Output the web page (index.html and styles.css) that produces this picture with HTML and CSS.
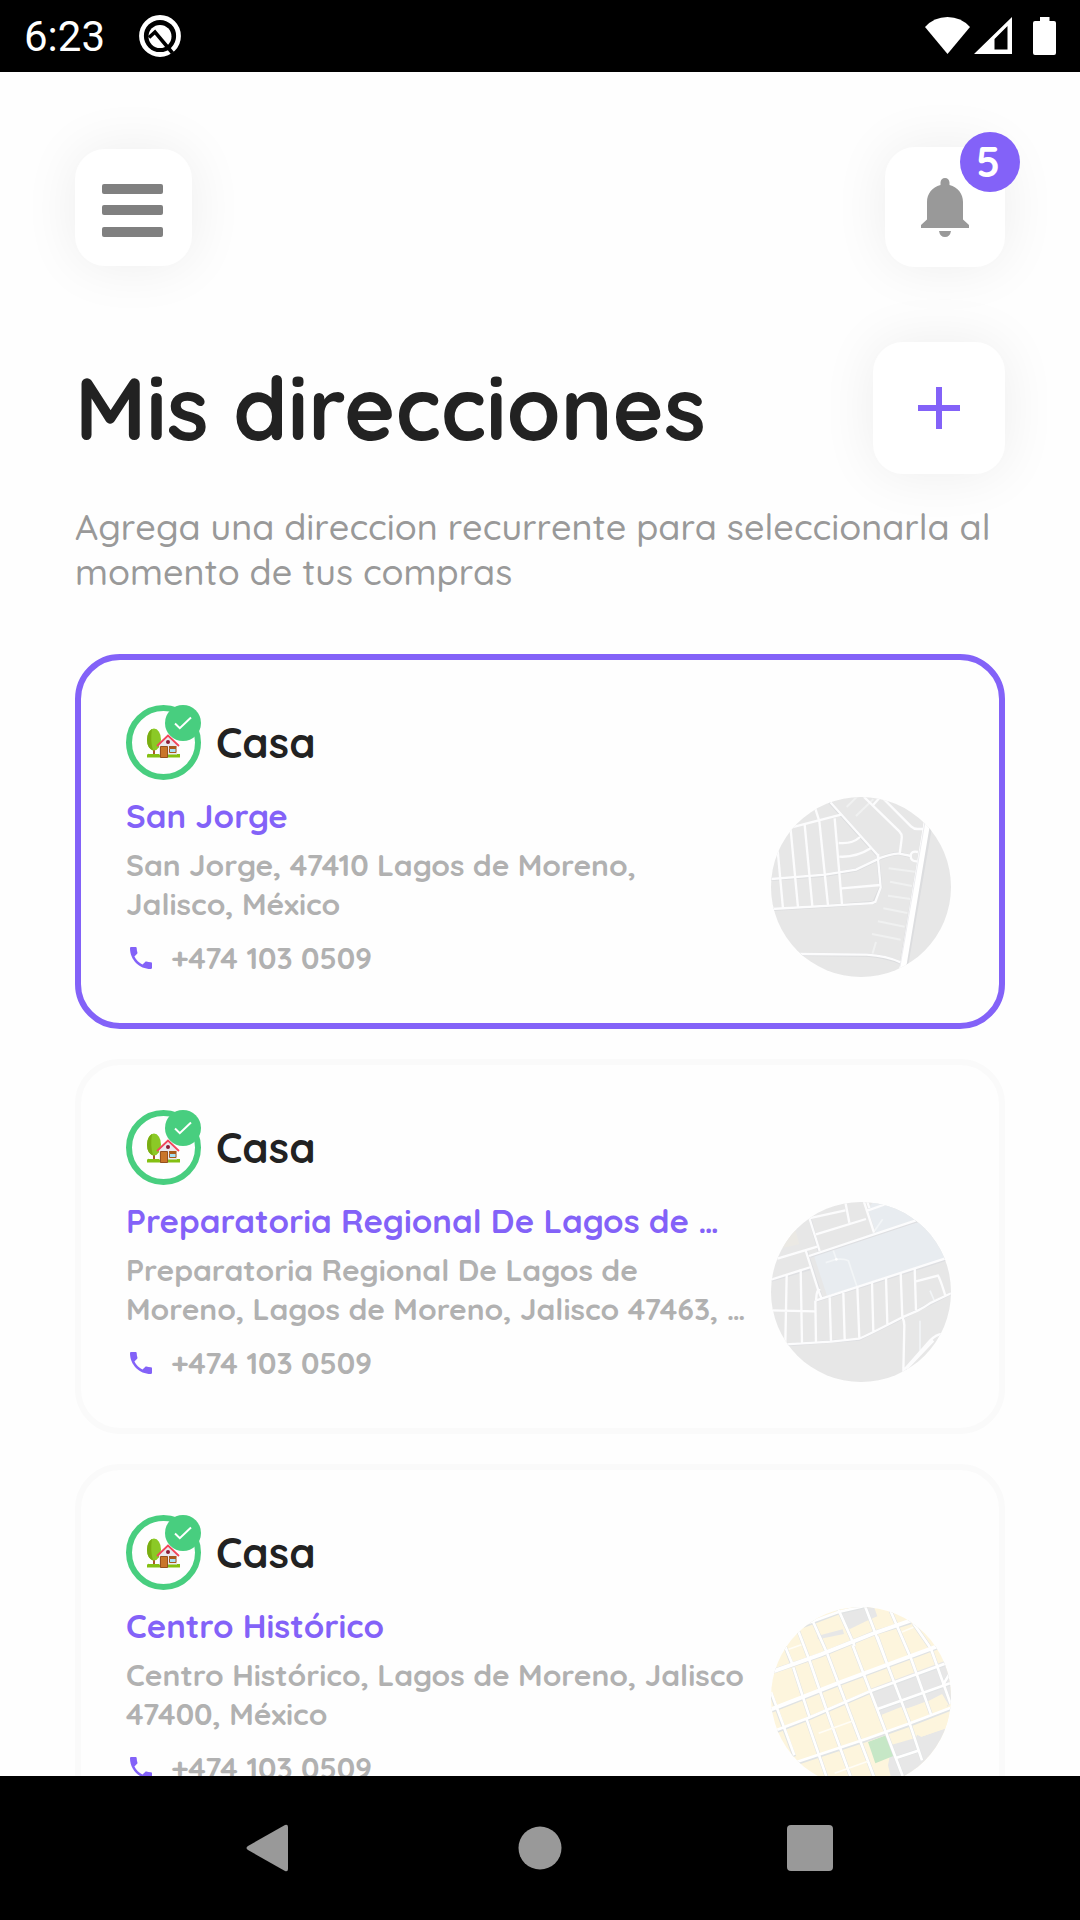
FILE: index.html
```html
<!DOCTYPE html>
<html lang="es">
<head>
<meta charset="utf-8">
<meta name="viewport" content="width=device-width, initial-scale=1">
<title>Mis direcciones</title>
<link rel="stylesheet" href="styles.css">
</head>
<body>
<svg class="sprite" aria-hidden="true">
  <symbol id="house" viewBox="0 0 33 30">
    <path d="M0 27q1-2 2-1l1 0 30 0q0 1 0 3.500H0z" fill="#84c012"/>
    <path d="M6 20h2v6H6z" fill="#a9592c"/>
    <ellipse cx="7" cy="11.500" rx="7" ry="11" fill="#8bc926"/>
    <path d="M5 1Q0 4 0 12q0 8 6 10.500Q3 12 5 1z" fill="#79ad12"/>
    <path d="M12 16l9-8.500 9 8.500v10.500H12z" fill="#ebe9f0"/>
    <path d="M10 18L21 7.500 32 18" fill="none" stroke="#f2465b" stroke-width="1.800"/>
    <circle cx="21" cy="14" r="2" fill="#8c1c35"/>
    <path d="M13.500 18.500h7v11h-7z" fill="#c9752a" stroke="#95501f"/>
    <path d="M22 18h7.500v2.500H22z" fill="#a9591c"/>
    <path d="M22.500 20.500h6.500v4h-6.500z" fill="#a6e0f5" stroke="#a9591c"/>
  </symbol>
  <symbol id="check" viewBox="0 0 18 14">
    <path d="M1 7.500l4.800 4.700L17 1.500" fill="none" stroke="#fff" stroke-width="2"/>
  </symbol>
  <symbol id="phone" viewBox="3 3 18 18">
    <path d="M6.620 10.790c1.440 2.830 3.760 5.140 6.590 6.590l2.200-2.200c.27-.27.67-.36 1.020-.24 1.120.37 2.330.57 3.570.57.55 0 1 .45 1 1V20c0 .55-.45 1-1 1-9.390 0-17-7.610-17-17 0-.55.45-1 1-1h3.500c.55 0 1 .45 1 1 0 1.250.2 2.450.57 3.570.11.35.03.74-.25 1.020l-2.200 2.200z" fill="#8362f8"/>
  </symbol>
</svg>

<div class="screen">
  <div class="status">
    <div class="status-side">
      <span class="clock">6:23</span>
      <svg class="status-q" viewBox="0 0 42 42" aria-hidden="true">
        <circle cx="21" cy="21" r="18.500" fill="none" stroke="#fff" stroke-width="4.800"/>
        <circle cx="21" cy="21.500" r="11.500" fill="#fff"/>
        <path d="M10 22.500l6-5.500 17.500 21" fill="none" stroke="#000" stroke-width="3.600"/>
      </svg>
    </div>
    <div class="status-side">
      <svg width="45" height="38" viewBox="0 0 45 38" aria-hidden="true"><path d="M0 10Q9 0 22.500 0T45 10L22.500 37z" fill="#fff"/></svg>
      <svg width="38" height="38" viewBox="0 0 38 38" aria-hidden="true"><path d="M38 0v37H0zM33.500 9L20.500 22v10.500h13z" fill="#fff" fill-rule="evenodd"/></svg>
      <svg class="battery" width="23" height="38" viewBox="0 0 23 38" aria-hidden="true"><path d="M7 0h9.500v4H21q2 0 2 2v30q0 2-2 2H2q-2 0-2-2V6q0-2 2-2h5z" fill="#fff"/></svg>
    </div>
  </div>

  <main class="content">
    <header class="topbar">
      <button class="tile menu" type="button" aria-label="Menú">
        <svg width="61" height="53" viewBox="0 0 61 53"><g fill="#808080"><rect width="61" height="10" rx="2"/><rect y="21" width="61" height="10" rx="2"/><rect y="43" width="61" height="10" rx="2"/></g></svg>
      </button>
      <button class="tile bell" type="button" aria-label="Notificaciones">
        <svg width="48" height="59" viewBox="0 0 48 59"><path d="M24 0c2.500 0 4.500 2 4.500 4.500V7C37 9 42 16 42 24v17.500l6 5.500v3H0v-3l6-5.500V24c0-8 5-15 13.500-17V4.500C19.500 2 21.500 0 24 0zM18 53h12q-1 6-6 6t-6-6z" fill="#999"/></svg>
        <span class="badge">5</span>
      </button>
    </header>

    <div class="heading">
      <h1>Mis direcciones</h1>
      <button class="tile add" type="button" aria-label="Agregar dirección">
        <svg width="42" height="42" viewBox="0 0 42 42"><path d="M18 0h6v18h18v6H24v18h-6V24H0v-6h18z" fill="#8362f8"/></svg>
      </button>
    </div>
    <p class="intro">Agrega una direccion recurrente para seleccionarla al momento de tus compras</p>

    <div class="list">
      <article class="card selected">
        <div class="info">
          <div class="kind"><span class="avatar"><svg class="house"><use href="#house"/></svg><span class="tick"><svg width="18" height="14"><use href="#check"/></svg></span></span><h2>Casa</h2></div>
          <h3>San Jorge</h3>
          <p class="address">San Jorge, 47410 Lagos de Moreno,<br>Jalisco, México</p>
          <a class="phone" href="tel:+4741030509"><svg width="22" height="22"><use href="#phone"/></svg>+474 103 0509</a>
        </div>
        <svg class="map" viewBox="93 81 540 540" aria-hidden="true">
          <rect x="93" y="81" width="540" height="540" fill="#e7e7e7"/>
          <g fill="none" stroke="#f0f1f1" stroke-width="6"><path d="M320 111l34-34M348 138l52-50M446 295l78 10M450 335l66 13M444 377l68 10M430 415l72 14M414 454l80 16M396 492l86 17M408 516l-12 40"/></g>
          <g fill="none" stroke="#dcdddf" stroke-width="10"><path d="M265 92l148 165 9 95-20 45-112 9-192 12M93 328l165-13 90-15 75-36q40-16 56-13l34 8M180 553l200 2q60 5 102 23M554 166L482 590M572 166L500 584"/></g>
          <g fill="none" stroke="#fcfcfd" stroke-width="7">
            <path d="M265 90l148 165 9 98-16 42q-8 5-20 5L93 417M93 327l162-13 93-15 75-36q40-14 55-12l36 7"/>
            <path d="M226 116l12 38 26 252M155 172l148-38M151 168l23 244M194 164l23 244M284 145l22 258M112 230l17 186M296 219q40 4 64-18M298 260q50 3 94-25M305 355l116-10M416 268l-2-16"/>
            <path d="M372 81l106 103q9 9 7 22l-6 46M400 104l20-22M425 81l88 88q8 8 20 8h22M180 552l200 2q60 4 102 23"/>
            <path d="M534 246q-22-5-22 12t20 16"/>
          </g>
          <path d="M562 150L487 600" stroke="#fff" stroke-width="20"/>
          <path d="M556 150L480 590" stroke="#e2e3e7" stroke-width="2"/>
        </svg>
      </article>

      <article class="card">
        <div class="info">
          <div class="kind"><span class="avatar"><svg class="house"><use href="#house"/></svg><span class="tick"><svg width="18" height="14"><use href="#check"/></svg></span></span><h2>Casa</h2></div>
          <h3>Preparatoria Regional De Lagos de …</h3>
          <p class="address">Preparatoria Regional De Lagos de<br>Moreno, Lagos de Moreno, Jalisco 47463, …</p>
          <a class="phone" href="tel:+4741030509"><svg width="22" height="22"><use href="#phone"/></svg>+474 103 0509</a>
        </div>
        <svg class="map" viewBox="93 66 540 540" aria-hidden="true">
          <rect x="93" y="66" width="540" height="540" fill="#e7e7e7"/>
          <path d="M210 228l422-138v-24H400l-17 20 25 72zM222 228l40 122 380-120v-128l-240 56z" fill="#e8ecf0"/>
          <path d="M124 205l40-62 14 50z" fill="#ebe9e4"/>
          <g fill="none" stroke="#f2f5f7" stroke-width="5"><path d="M404 152l24-34M278 206l11 32-32 10M289 238q25-2 36 4l26 78M540 422v90M570 332l12 28"/></g>
          <g fill="none" stroke="#dedfe2" stroke-width="9"><path d="M211 119l26 94M199 211l46 144M93 301l122-36M211 229L534 122M230 362L632 234M137 495l220-17 130-64 146-74"/></g>
          <g fill="none" stroke="#fcfcfd" stroke-width="7">
            <path d="M206 115l110-24M228 163l150-46M316 66l12 62M209 117l30 96M372 66l30 92M382 92l56-20M388 84l-6-18"/>
            <path d="M112 236l120-36M207 228L528 121M93 299l120-38M196 208l38 120 10 26M228 362l2-20q4-18 10-10M226 362L632 230M226 362l2 126"/>
            <path d="M93 391l132 3M140 285l-4 205M182 268l4 222M269 352l4 134M310 338l4 140M352 320l6 156M396 308l4 148M438 294l4 138M482 278l5 134M524 264l4 126M137 493l136-8 84-9q10-2 130-64l46-20q20-10 40-24l60-28"/>
            <path d="M528 304l66-17q6 8 22 60M487 412q6 10 6 24l-3 140M490 572l80-90q20-20 36-20M500 566l80-84"/>
          </g>
          <circle cx="289" cy="238" r="4" fill="#fff"/>
        </svg>
      </article>

      <article class="card">
        <div class="info">
          <div class="kind"><span class="avatar"><svg class="house"><use href="#house"/></svg><span class="tick"><svg width="18" height="14"><use href="#check"/></svg></span></span><h2>Casa</h2></div>
          <h3>Centro Histórico</h3>
          <p class="address">Centro Histórico, Lagos de Moreno, Jalisco<br>47400, México</p>
          <a class="phone" href="tel:+4741030509"><svg width="22" height="22"><use href="#phone"/></svg>+474 103 0509</a>
        </div>
        <svg class="map" viewBox="93 81 540 540" aria-hidden="true">
          <rect x="93" y="81" width="540" height="540" fill="#fdf5dd"/>
          <g fill="#e7e7e7"><path d="M300 98l78-17h24l10 28-28 12-54 26-14-6zM232 168l76-20 4 14-78 16zM392 326l220-82 30 0v110l-20 26-14-36-46 26-90 22-46 18-14-10z"/><path d="M456 494l70-20 6-10 12 6 88-30v180H460l-16-64z"/></g>
          <path d="M425 404l60-24 12 46-62 22zM500 386l60-22 8 34-58 18zM560 366l46-24 20 32-50 22zM512 440l70-12 54-24v34l-92 32-12-6z" fill="#fdf5dd"/>
          <path d="M384 486l54-20 22 62-54 22z" fill="#c6e7c6"/>
          <g fill="none" stroke="#e0e3e4" stroke-width="14"><path d="M93 276l150-51 160-66 110-34M93 392L300 310l350-130"/></g>
          <g fill="none" stroke="#e0e3e4" stroke-width="11"><path d="M190 138l105-40 130-30M110 454l100-40 180-78L640 244M170 550l210-70 130-46 130-50M415 388l220-78M93 340l70 190M134 196l22 58M170 140l38 100M160 262l48 148M218 122l40 90M208 240l62 180 64 176M262 222l100 264 42 110M294 86l50 112M338 196l150 392M376 81l130 340 40 120M412 170l36 100M452 94l62 144 60 168M520 130l50 72M572 204l60 168M608 316l30-50M200 418l62 180M468 534l66-22"/></g>
          <path d="M93 276l150-53 160-64 110-38M93 388L300 307l350-130" fill="none" stroke="#fff" stroke-width="12"/>
          <g fill="none" stroke="#fff" stroke-width="8"><path d="M190 134l105-38 130-30M110 450l100-38 180-78L640 242M170 546l210-70 130-46 130-50M415 386l220-78M93 336l70 190M134 196l22 54M170 140l38 100M160 262l48 148M218 122l40 90M208 240l62 180 64 176M262 222l100 264 42 110M294 86l50 112M338 196l150 392M376 81l130 340 40 120M412 170l36 100M452 94l62 144 60 168M520 130l50 72M572 204l60 168M608 316l30-50M200 418l62 180M468 534l66-22"/></g>
          <path d="M146 208l38-14M236 460l104-38M284 580l100-36M486 156l34-14" stroke="#fffdf6" stroke-width="5"/>
        </svg>
      </article>
    </div>
  </main>

  <nav class="system-nav" aria-label="Sistema">
    <button type="button" aria-label="Atrás"><svg width="48" height="48" viewBox="0 0 48 48"><path d="M42 3v42q0 3-3 2L2 26q-3-2 0-4L39 1q3-1 3 2z" fill="#999"/></svg></button>
    <button type="button" aria-label="Inicio"><svg width="44" height="44" viewBox="0 0 44 44"><circle cx="22" cy="22" r="21.500" fill="#999"/></svg></button>
    <button type="button" aria-label="Recientes"><svg width="46" height="46" viewBox="0 0 46 46"><rect width="46" height="46" rx="4" fill="#999"/></svg></button>
  </nav>
</div>
</body>
</html>
```
FILE: styles.css
```css
* { box-sizing: border-box; }
body {
  margin: 0;
  background: #fefefe;
  color: #222;
  font-family: Quicksand, "Noto Sans", sans-serif;
}
h1, h2, h3, p { margin: 0; }
button { border: 0; padding: 0; font: inherit; cursor: pointer; }
svg { display: block; flex: none; }
.sprite { display: none; }

.screen {
  display: flex;
  flex-direction: column;
  height: 100vh;
}

.status {
  display: flex;
  justify-content: space-between;
  flex: none;
  height: 72px;
  padding: 0 24px;
  background: #000;
  color: #fff;
}
.status-side { display: flex; align-items: center; gap: 4px; }
.clock { padding-top: 2px; font: 400 42px/70px Roboto, sans-serif; }
.status-q { width: 42px; height: 42px; margin-left: 30px; }
.battery { margin-left: 17px; }

.content {
  flex: 1;
  min-height: 0;
  overflow-y: auto;
  scrollbar-width: none;
  padding: 75px 75px 0;
}

.tile {
  position: relative;
  display: flex;
  align-items: center;
  justify-content: center;
  flex: none;
  border-radius: 30px;
  background: #fff;
  box-shadow: 0 0 56px rgba(0, 0, 0, 0.07);
}
.menu { width: 117px; height: 117px; padding: 6px 3px 0 0; }
.bell { width: 120px; height: 120px; }
.add { width: 132px; height: 132px; }

.badge {
  position: absolute;
  top: -15px;
  right: -15px;
  width: 60px;
  height: 60px;
  padding-right: 4px;
  border-radius: 50%;
  background: #8362f8;
  color: #fff;
  font-size: 42px;
  font-weight: 700;
  line-height: 60px;
  text-align: center;
}

.topbar, .heading {
  display: flex;
  align-items: center;
  justify-content: space-between;
}
.topbar { margin-bottom: 75px; }
h1 { font-size: 87px; font-weight: 700; line-height: 110px; }

.intro {
  margin: 30px 0 60px;
  color: #999;
  font-size: 36px;
  font-weight: 500;
  line-height: 45px;
  font-kerning: none;
}

.list { display: grid; gap: 30px; }
.card {
  display: flex;
  align-items: flex-end;
  justify-content: space-between;
  gap: 15px;
  padding: 45px 48px 45px 45px;
  border: 6px solid #fafafa;
  border-radius: 45px;
}
.card.selected { border-color: #8362f8; }
.info { flex: 1; min-width: 0; white-space: nowrap; }

.kind { display: flex; align-items: center; gap: 15px; margin-bottom: 15px; }
.kind h2 { font-size: 42px; font-weight: 700; line-height: 52px; }
.avatar {
  position: relative;
  display: flex;
  align-items: center;
  justify-content: center;
  width: 75px;
  height: 75px;
  border: 6px solid #48ce7f;
  border-radius: 50%;
}
.house { width: 33px; height: 30px; }
.tick {
  position: absolute;
  top: -6px;
  right: -6px;
  display: flex;
  align-items: center;
  justify-content: center;
  width: 36px;
  height: 36px;
  border-radius: 50%;
  background: #48ce7f;
}

h3 {
  margin-bottom: 10px;
  color: #8362f8;
  font-size: 33px;
  font-weight: 700;
  line-height: 41px;
}
.address, .phone {
  color: #b1b1b1;
  font-size: 30px;
  font-weight: 700;
  line-height: 39px;
  font-variant-numeric: tabular-nums;
}
.phone {
  display: flex;
  align-items: center;
  gap: 19px;
  margin-top: 14px;
  padding-left: 4px;
  text-decoration: none;
  line-height: 40px;
}

.map { width: 180px; height: 180px; margin-bottom: 1px; border-radius: 50%; }

.system-nav {
  display: flex;
  align-items: center;
  justify-content: center;
  flex: none;
  height: 144px;
  background: #000;
}
.system-nav button {
  display: flex;
  align-items: center;
  justify-content: center;
  width: 25%;
  height: 100%;
  background: none;
}
```
